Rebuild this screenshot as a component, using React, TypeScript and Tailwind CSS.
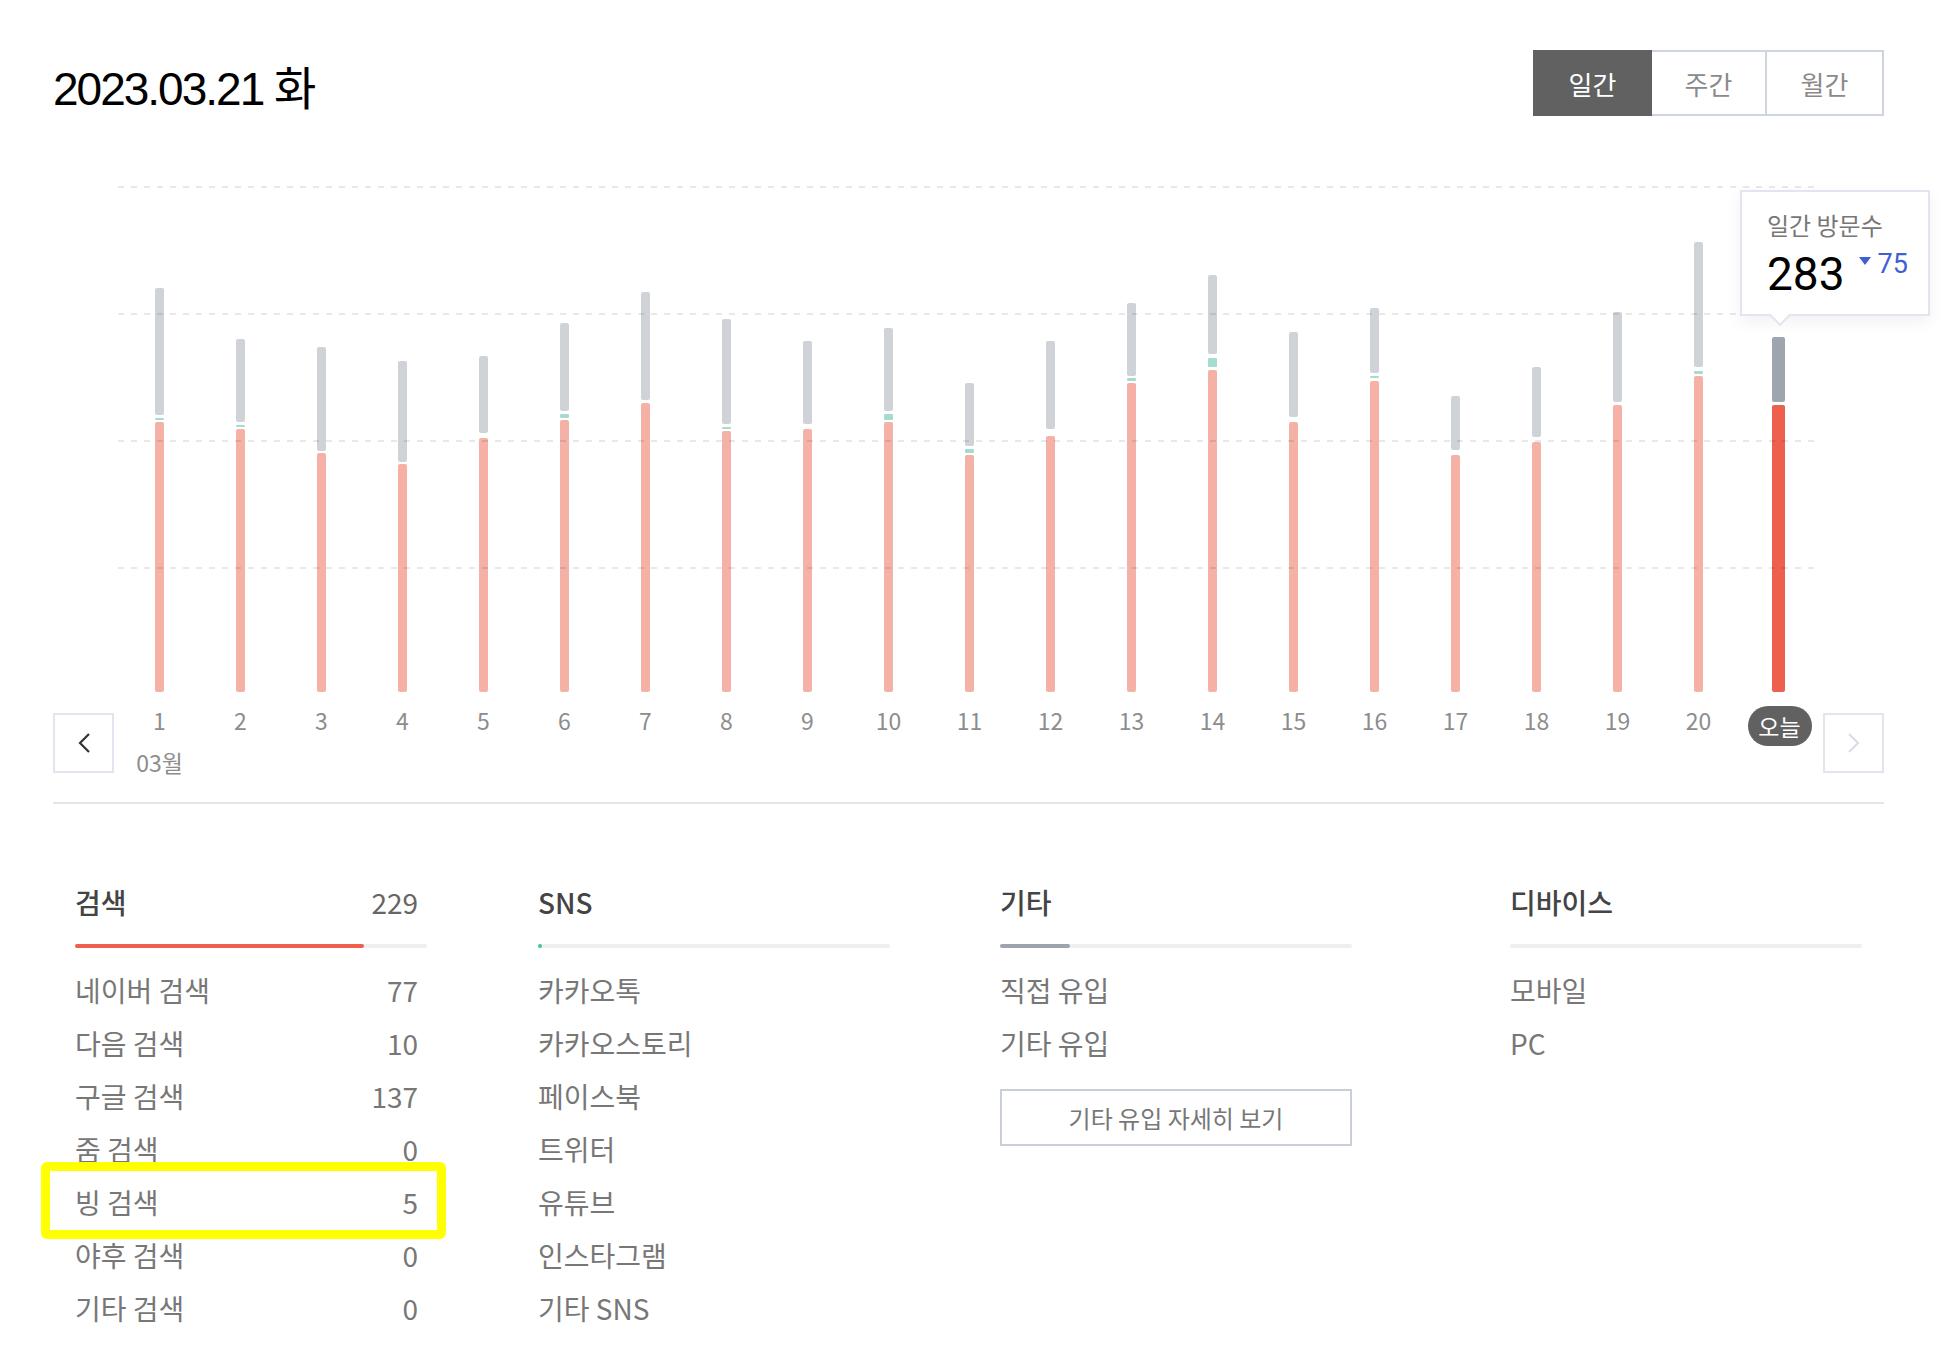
import React from 'react'

type Bar = {
  grayTop: number
  grayBot: number
  teal?: [number, number]
  redTop: number
}

// y values are page pixels; the chart svg starts at y=180
const bars: Bar[] = [
  { grayTop: 288, grayBot: 415, teal: [418, 420], redTop: 422 },
  { grayTop: 339, grayBot: 422, teal: [425, 427], redTop: 429 },
  { grayTop: 347, grayBot: 451, redTop: 453 },
  { grayTop: 361, grayBot: 462, redTop: 464 },
  { grayTop: 356, grayBot: 433, redTop: 438 },
  { grayTop: 323, grayBot: 411, teal: [414, 418], redTop: 420 },
  { grayTop: 292, grayBot: 400, redTop: 403 },
  { grayTop: 319, grayBot: 424, teal: [427, 429], redTop: 431 },
  { grayTop: 341, grayBot: 424, redTop: 429 },
  { grayTop: 328, grayBot: 411, teal: [414, 420], redTop: 422 },
  { grayTop: 383, grayBot: 446, teal: [449, 453], redTop: 455 },
  { grayTop: 341, grayBot: 429, redTop: 436 },
  { grayTop: 303, grayBot: 376, teal: [378, 381], redTop: 383 },
  { grayTop: 275, grayBot: 354, teal: [358, 367], redTop: 370 },
  { grayTop: 332, grayBot: 417, redTop: 422 },
  { grayTop: 308, grayBot: 373, teal: [376, 378], redTop: 381 },
  { grayTop: 396, grayBot: 450, redTop: 455 },
  { grayTop: 367, grayBot: 437, redTop: 442 },
  { grayTop: 312, grayBot: 402, redTop: 405 },
  { grayTop: 242, grayBot: 367, teal: [371, 374], redTop: 376 },
  { grayTop: 337, grayBot: 402, redTop: 405 },
]

const OY = 180
const BOTTOM = 692

const search = [
  ['네이버 검색', '77'],
  ['다음 검색', '10'],
  ['구글 검색', '137'],
  ['줌 검색', '0'],
  ['빙 검색', '5'],
  ['야후 검색', '0'],
  ['기타 검색', '0'],
]

const sns = ['카카오톡', '카카오스토리', '페이스북', '트위터', '유튜브', '인스타그램', '기타 SNS']

function Chart() {
  return (
    <svg width={1831} height={523} className="block">
      {bars.map((b, i) => {
        const today = i === bars.length - 1
        const w = today ? 13 : 9
        const cx = today ? 1725.5 : 106.5 + 81 * i
        const x = cx - w / 2
        return (
          <g key={i}>
            <rect
              x={x}
              y={b.grayTop - OY}
              width={w}
              height={b.grayBot - b.grayTop}
              rx={2}
              fill={today ? '#9ea5ae' : '#cfd3d8'}
            />
            {b.teal && (
              <rect
                x={x}
                y={b.teal[0] - OY}
                width={w}
                height={b.teal[1] - b.teal[0]}
                rx={1}
                fill="#a6dccd"
              />
            )}
            <rect
              x={x}
              y={b.redTop - OY}
              width={w}
              height={BOTTOM - b.redTop}
              rx={2}
              fill={today ? '#ee604e' : '#f5b1a6'}
            />
          </g>
        )
      })}
      {[7, 134, 261, 388].map(y => (
        <line
          key={y}
          x1={65}
          x2={1762}
          y1={y}
          y2={y}
          stroke="rgba(0,0,0,0.09)"
          strokeWidth={2}
          strokeDasharray="6 7"
        />
      ))}
    </svg>
  )
}

function Track({ fill, color }: { fill: string; color: string }) {
  return (
    <div className="mt-[24px] h-[4px] rounded-full bg-[#efefef]">
      <div className="h-[4px] rounded-full" style={{ width: fill, background: color }} />
    </div>
  )
}

export default function App() {
  return (
    <div className="w-[1946px] h-[1362px] bg-white font-['Noto_Sans_CJK_KR',sans-serif]">
      <div className="ml-[53px] w-[1831px] pt-[50px]">
        <div className="flex justify-between items-start h-[130px]">
          <h1 className="mt-[16px] text-[46px] leading-[46px] tracking-[-2px] text-black font-['Liberation_Sans','Noto_Sans_CJK_KR',sans-serif]">
            2023.03.21 <span className="tracking-normal">화</span>
          </h1>
          <div className="flex h-[66px] text-[26px]">
            <button className="w-[119px] h-full bg-[#616161] text-white">일간</button>
            <button className="w-[115px] h-full border-y-2 border-r-2 border-[#cfd5df] text-[#8a8a8a]">
              주간
            </button>
            <button className="w-[117px] h-full border-y-2 border-r-2 border-[#cfd5df] text-[#8a8a8a]">
              월간
            </button>
          </div>
        </div>

        <div className="relative h-[523px]">
          <Chart />
          <div className="absolute left-[1687px] top-[10px] w-[190px] h-[126px] bg-white border-2 border-[#e1e5ef] shadow-[0_6px_16px_rgba(0,0,0,0.06)] pl-[25px] pt-[18px]">
            <div className="text-[24px] leading-[30px] text-[#777]">일간 방문수</div>
            <div className="mt-[9px] flex items-start">
              <span className="text-[46px] leading-[50px] text-black font-['Roboto',sans-serif]">283</span>
              <svg width="12" height="8" viewBox="0 0 12 8" className="ml-[14px] mt-[8px]">
                <path d="M0 0 L12 0 L6 8 Z" fill="#3f5fd6" />
              </svg>
              <span className="ml-[7px] mt-[2px] text-[27px] leading-none text-[#3f5fd6] font-['Roboto',sans-serif]">
                75
              </span>
            </div>
            <div className="absolute left-[30px] top-[115px] w-4 h-4 rotate-45 bg-white border-r-2 border-b-2 border-[#e1e5ef]" />
          </div>
        </div>

        <div className="flex items-start h-[99px]">
          <button className="mt-[10px] w-[61px] h-[60px] border-2 border-[#e1e5ee] flex items-center justify-center">
            <svg width="14" height="22" viewBox="0 0 14 22">
              <path d="M12 2 L3 11 L12 20" fill="none" stroke="#333" strokeWidth="2.2" />
            </svg>
          </button>
          <div className="ml-[5px] grid grid-cols-[repeat(21,81px)]">
            {bars.map((_, i) =>
              i === 20 ? (
                <div key={i} className="flex justify-center">
                  <span className="mt-[3px] w-[64px] h-[40px] rounded-full bg-[#616161] text-white text-[23px] leading-[40px] text-center">
                    오늘
                  </span>
                </div>
              ) : (
                <div key={i} className="flex flex-col items-center text-[23px] text-[#8d8d8d]">
                  <span className="mt-[-3px] leading-[40px]">{i + 1}</span>
                  {i === 0 && <span className="mt-[7px] leading-[30px]">03월</span>}
                </div>
              ),
            )}
          </div>
          <button className="ml-[3px] mt-[10px] w-[61px] h-[60px] border-2 border-[#e1e5ee] flex items-center justify-center">
            <svg width="14" height="22" viewBox="0 0 14 22">
              <path d="M2 2 L11 11 L2 20" fill="none" stroke="#d9dee7" strokeWidth="2.2" />
            </svg>
          </button>
        </div>
        <div className="h-[2px] bg-[#e6e6e6]" />

        <div className="flex pt-[80px] pl-[22px]">
          <div className="w-[352px]">
            <div className="flex justify-between h-[36px] leading-[36px] pr-[9px]">
              <span className="text-[28px] font-medium text-[#444]">검색</span>
              <span className="text-[28px] text-[#666]">229</span>
            </div>
            <Track fill="82%" color="#ee604e" />
            <div className="mt-[16px]">
              {search.map(([name, n]) => (
                <div key={name} className="relative flex justify-between pr-[9px] h-[53px] leading-[53px] text-[28px] text-[#777]">
                  <span>{name}</span>
                  <span>{n}</span>
                  {name === '빙 검색' && (
                    <div className="absolute left-[-34px] top-[-14px] w-[405px] h-[77px] border-[9px] border-[#ffff00] rounded-[6px]" />
                  )}
                </div>
              ))}
            </div>
          </div>

          <div className="ml-[111px] w-[352px]">
            <div className="h-[36px] leading-[36px] text-[28px] font-medium text-[#444]">SNS</div>
            <Track fill="4px" color="#46c2a2" />
            <div className="mt-[16px]">
              {sns.map(name => (
                <div key={name} className="h-[53px] leading-[53px] text-[28px] text-[#777]">
                  {name}
                </div>
              ))}
            </div>
          </div>

          <div className="ml-[110px] w-[352px]">
            <div className="h-[36px] leading-[36px] text-[28px] font-medium text-[#444]">기타</div>
            <Track fill="20%" color="#9ea4ad" />
            <div className="mt-[16px]">
              {['직접 유입', '기타 유입'].map(name => (
                <div key={name} className="h-[53px] leading-[53px] text-[28px] text-[#777]">
                  {name}
                </div>
              ))}
            </div>
            <button className="mt-[19px] w-full h-[57px] border-2 border-[#c9cfd9] flex items-center justify-center text-[24px] text-[#777]">
              기타 유입 자세히 보기
            </button>
          </div>

          <div className="ml-[158px] w-[352px]">
            <div className="h-[36px] leading-[36px] text-[28px] font-medium text-[#444]">디바이스</div>
            <Track fill="0%" color="#ee604e" />
            <div className="mt-[16px]">
              {['모바일', 'PC'].map(name => (
                <div key={name} className="h-[53px] leading-[53px] text-[28px] text-[#777]">
                  {name}
                </div>
              ))}
            </div>
          </div>
        </div>
      </div>
    </div>
  )
}
